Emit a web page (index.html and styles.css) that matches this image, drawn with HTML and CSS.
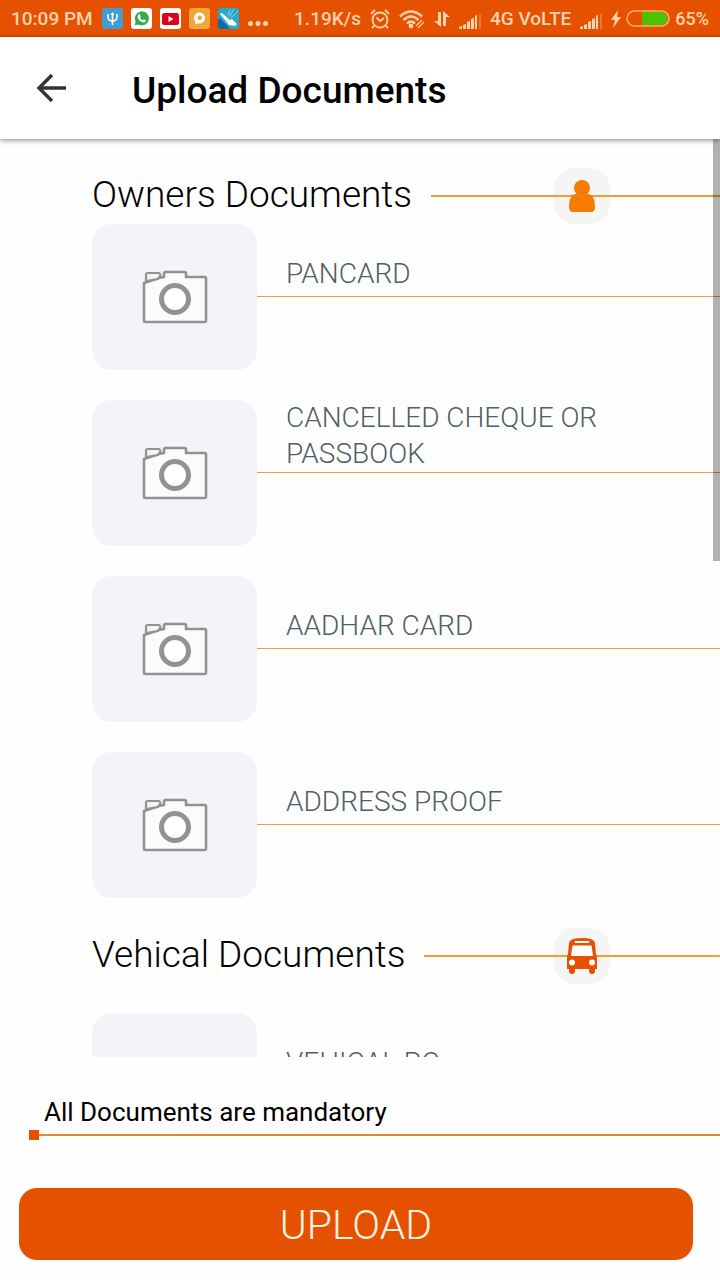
FILE: index.html
```html
<!DOCTYPE html>
<html lang="en">
<head>
  <meta charset="UTF-8">
  <meta name="viewport" content="width=device-width, initial-scale=1.0">
  <title>Upload Documents</title>
  <link rel="stylesheet" href="styles.css">
</head>
<body>
  <svg class="sprite" aria-hidden="true">
    <symbol id="camera" viewBox="0 0 66 54">
      <path d="M2 13L17 8l5-1V3.500Q22 2 23.500 2h19Q44 2 44 3.500V7h18.500Q64 7 64 8.500v42Q64 52 62.500 52h-59Q2 52 2 50.500z" fill="#fbfbfb" stroke="#929292" stroke-width="2.600" stroke-linejoin="round"/>
      <path d="M4 11V4.500Q4 3 5.500 3h11Q18 3 18.500 6l-3 3z" fill="#f5f3f7" stroke="#929292" stroke-width="2.200"/>
      <circle cx="33" cy="29" r="13.500" fill="#fff" stroke="#929292" stroke-width="5"/>
    </symbol>
    <symbol id="signal" viewBox="0 0 22 16">
      <path d="M0 16v-2l3-1v3zM4 16v-4l3-1v5zM8 16V9l3-1v8zM12 16V6l3-1v11zM16 16V3l2-1v14z" fill="#ffd3b0"/>
      <path d="M20 16V1h2v15z" fill="#ffd3b0" opacity=".3"/>
    </symbol>
  </svg>

  <div class="status">
    <span>10:09 PM</span>
    <div class="apps">
      <svg viewBox="0 0 21 21"><rect width="21" height="21" rx="3" fill="#439bd6"/><path d="M6 6v3q0 4 4.500 4T15 9V6M10.500 5v12" fill="none" stroke="#fff" stroke-width="1.600"/><path d="M8.500 7l2-3 2 3z" fill="#fff"/></svg>
      <svg viewBox="0 0 21 21"><rect width="21" height="21" rx="3" fill="#fff"/><path d="M3.500 17.500l1.200-3.800a7 7 0 1 1 2.600 2.700z" fill="#36ad4c"/><path d="M7.500 6.500l1.300-.3 1 2.300-.8 1q1 2 2.800 2.700l1-1 2 1-.2 1.300q-1 1.300-2.800.8-4-1.200-5.200-5-.2-1.800.9-2.800z" fill="#fff"/></svg>
      <svg viewBox="0 0 21 21"><rect width="21" height="21" rx="3" fill="#fff"/><rect x="2" y="5" width="17" height="12" rx="2.500" fill="#e0001b"/><path d="M8.500 8v6l5-3z" fill="#fff"/></svg>
      <svg viewBox="0 0 21 21"><rect width="21" height="21" rx="3" fill="#f3a53c"/><path d="M10.500 4.500a5.500 5.500 0 1 1-1.700 10.700L6 16.500l.3-3A5.500 5.500 0 0 1 10.500 4.500z" fill="#fff"/><circle cx="10.700" cy="9.800" r="2.200" fill="#f3a53c"/></svg>
      <svg viewBox="0 0 21 21"><rect width="21" height="21" rx="3" fill="#27a9cf"/><path d="M0 12v6q0 3 3 3h9L2 10z" fill="#1468a8"/><path d="M11 9l5-8M13 10l7-7M10 7l2-5" stroke="#82dbe6"/><path d="M2 6l2-1 8 7 2-1 5 5-2 2-6-1z" fill="#fff"/></svg>
    </div>
    <svg class="more" viewBox="0 0 20 18"><g fill="#ffd3b0"><circle cx="2.500" cy="13.500" r="2.500"/><circle cx="10" cy="13.500" r="2.500"/><circle cx="17.500" cy="13.500" r="2.500"/></g></svg>

    <div class="system">
      <span>1.19K/s</span>
      <svg width="20" height="20" viewBox="0 0 20 20" fill="none" stroke="#ffd3b0" stroke-width="1.800"><circle cx="10" cy="11" r="7.500"/><path d="M1 5l4-4M19 5l-4-4M6.500 8.500L10 12l4-3M4 17l-2 2M16 17l2 2"/></svg>
      <svg width="26" height="20" viewBox="0 0 26 20" fill="none" stroke="#ffd3b0" stroke-width="2.400"><path d="M1 7.500q11-10 22 0M4.500 11q7.500-7 15 0M8 14.500q4-4 8 0"/><circle cx="12" cy="17" r="1.200"/><path d="M17 17l6-6M19 19l6-6" stroke-width="1.200"/></svg>
      <svg width="16" height="18" viewBox="0 0 16 18"><path d="M4 2h3v15l-7-6h4zM9 16V1l7 6h-4v9z" fill="#ffd3b0"/></svg>
      <svg class="low" width="22" height="16"><use href="#signal"/></svg>
      <span>4G VoLTE</span>
      <svg class="low" width="22" height="16"><use href="#signal"/></svg>
      <div class="power">
        <svg width="10" height="18" viewBox="0 0 10 18"><path d="M7 0L0 10h4L2 18l8-11H6z" fill="#ffd3b0"/></svg>
        <svg width="44" height="17" viewBox="0 0 44 17"><path d="M16 2h19a6.500 6.500 0 0 1 0 13H16z" fill="#4cc300"/><rect x="1" y="1" width="42" height="15" rx="7.500" fill="none" stroke="#ffb070" stroke-width="1.600"/></svg>
        <span class="percent">65%</span>
      </div>
    </div>
  </div>

  <header>
    <button class="back" aria-label="Back">
      <svg width="32" height="32" viewBox="0 0 32 32" fill="none" stroke="#333" stroke-width="3.400"><path d="M31 16H4M17 3L4 16l13 13"/></svg>
    </button>
    <h1>Upload Documents</h1>
  </header>

  <main>
    <div class="scrollbar"></div>

    <section>
      <div class="section-head">
        <h2>Owners Documents</h2>
        <div class="rule">
          <div class="badge">
            <svg width="28" height="34" viewBox="0 0 28 34" fill="#f57c00"><circle cx="14" cy="9" r="8"/><path d="M5 16q4-2 5 0 4 3 8 0 1-2 5 0 4 3 4 12 0 5-4 5H5q-4 0-4-5 0-9 4-12z"/></svg>
          </div>
        </div>
      </div>

      <div class="doc">
        <button class="tile" aria-labelledby="pancard"><svg><use href="#camera"/></svg></button>
        <div class="label"><span id="pancard">PANCARD</span></div>
      </div>
      <div class="doc">
        <button class="tile" aria-labelledby="cheque"><svg><use href="#camera"/></svg></button>
        <div class="label"><span id="cheque">CANCELLED CHEQUE OR PASSBOOK</span></div>
      </div>
      <div class="doc">
        <button class="tile" aria-labelledby="aadhar"><svg><use href="#camera"/></svg></button>
        <div class="label"><span id="aadhar">AADHAR CARD</span></div>
      </div>
      <div class="doc">
        <button class="tile" aria-labelledby="address"><svg><use href="#camera"/></svg></button>
        <div class="label"><span id="address">ADDRESS PROOF</span></div>
      </div>
    </section>

    <section class="vehicle">
      <div class="section-head">
        <h2>Vehical Documents</h2>
        <div class="rule">
          <div class="badge">
            <svg width="32" height="38" viewBox="0 0 32 38"><path d="M3 6q1-5 13-5t13 5l1 11q1 2 1 4v11H1V21q0-2 1-4z" fill="#e65100"/><path d="M3 31h6v3q0 3-3 3t-3-3zM23 31h6v3q0 3-3 3t-3-3z" fill="#e65100"/><path d="M6.500 8.500h19l1.500 10.500H5z" fill="#fff"/><path d="M9.500 5h13" stroke="#fff" stroke-width="1.800" stroke-linecap="round"/><circle cx="6" cy="25.500" r="3" fill="#fff"/><circle cx="26" cy="25.500" r="3" fill="#fff"/></svg>
          </div>
        </div>
      </div>

      <div class="doc">
        <button class="tile" aria-labelledby="rc"><svg><use href="#camera"/></svg></button>
        <div class="label"><span id="rc">VEHICAL RC</span></div>
      </div>
    </section>
  </main>

  <footer>
    <p class="note">All Documents are mandatory</p>
    <div class="note-line"></div>
    <button class="upload">UPLOAD</button>
  </footer>
</body>
</html>
```

FILE: styles.css
```css
:root {
  --orange: #e65100;
  --line: #f0a030;
  --status-text: #ffd3b0;
  --tile: #f5f3f7;
}

* {
  box-sizing: border-box;
}

body {
  margin: 0;
  height: 100vh;
  display: flex;
  flex-direction: column;
  background: #fefefe;
  color: #000;
  font-family: Roboto, "Liberation Sans", sans-serif;
}

button {
  border: none;
  padding: 0;
  font-family: inherit;
  cursor: pointer;
}

svg {
  display: block;
}

.sprite {
  position: absolute;
  width: 0;
  height: 0;
}

/* status bar */
.status {
  flex: none;
  height: 37px;
  padding: 0 11px;
  display: flex;
  align-items: center;
  gap: 9px;
  background: var(--orange);
  color: var(--status-text);
  font-size: 19px;
  font-weight: 500;
  white-space: nowrap;
}

.apps {
  display: flex;
  gap: 8px;
}

.apps svg {
  width: 21px;
  height: 21px;
}

.more {
  width: 20px;
  height: 18px;
}

.system {
  margin-left: auto;
  display: flex;
  align-items: center;
  gap: 9px;
}

.low {
  margin-top: 4px;
}

.power {
  display: flex;
  align-items: center;
  gap: 5px;
}

.percent {
  font-size: 18px;
}

/* app bar */
header {
  flex: none;
  height: 102px;
  padding: 0 35px;
  display: flex;
  align-items: center;
  gap: 65px;
  background: #fff;
  box-shadow: 0 1px 5px rgba(0, 0, 0, 0.5);
  z-index: 1;
}

.back {
  background: none;
}

h1 {
  margin: 0;
  padding-top: 4px;
  font-size: 37px;
  font-weight: 500;
}

/* document list */
main {
  position: relative;
  flex: 1;
  min-height: 0;
  overflow: hidden;
  padding: 29px 0 0 92px;
}

.scrollbar {
  position: absolute;
  top: 0;
  right: 0;
  width: 7px;
  height: 46%;
  background: rgba(0, 0, 0, 0.3);
  z-index: 1;
}

.section-head {
  height: 56px;
  display: flex;
  align-items: center;
  gap: 19px;
}

h2 {
  margin: 0;
  padding-bottom: 2px;
  font-size: 37px;
  font-weight: 300;
  line-height: 48px;
}

.rule {
  flex: 1;
  height: 56px;
  padding-right: 110px;
  display: flex;
  justify-content: flex-end;
  background: linear-gradient(var(--line), var(--line)) center / 100% 2px no-repeat;
}

/* the rule runs on across the badge, behind its icon */
.badge {
  width: 56px;
  height: 56px;
  display: flex;
  align-items: center;
  justify-content: center;
  border-radius: 20px;
  background: linear-gradient(var(--line), var(--line)) center / 100% 2px no-repeat #f5f5f5;
}

.doc {
  display: flex;
  margin-bottom: 30px;
}

.tile {
  flex: none;
  width: 165px;
  height: 146px;
  display: flex;
  align-items: center;
  justify-content: center;
  border-radius: 20px;
  background: var(--tile);
}

.tile svg {
  width: 66px;
  height: 54px;
}

.label {
  flex: 1;
  height: 73px;
  padding-left: 29px;
  display: flex;
  flex-direction: column;
  justify-content: flex-end;
  border-bottom: 1px solid var(--line);
  color: #4f5f66;
  font-size: 28px;
  font-weight: 300;
  line-height: 36px;
}

.label span {
  flex: none;
}

/* breathing room under one-line labels, gives way to longer ones */
.label::after {
  content: "";
  flex: 0 1 4px;
}

.vehicle .section-head {
  margin-bottom: 29px;
}

/* bottom area */
footer {
  flex: none;
  padding: 39px 27px 20px 19px;
}

.note {
  margin: 0;
  padding-left: 25px;
  font-size: 26px;
  line-height: 32px;
}

.note-line {
  margin: 2px -27px 48px 10px;
  height: 10px;
  background:
    linear-gradient(var(--orange), var(--orange)) left / 10px 10px no-repeat,
    linear-gradient(#e08a2c, #e08a2c) center / 100% 2px no-repeat;
}

.upload {
  width: 100%;
  height: 72px;
  padding-top: 2px;
  border-radius: 18px;
  background: var(--orange);
  color: #fff3e0;
  font-size: 41px;
  font-weight: 300;
}
```
